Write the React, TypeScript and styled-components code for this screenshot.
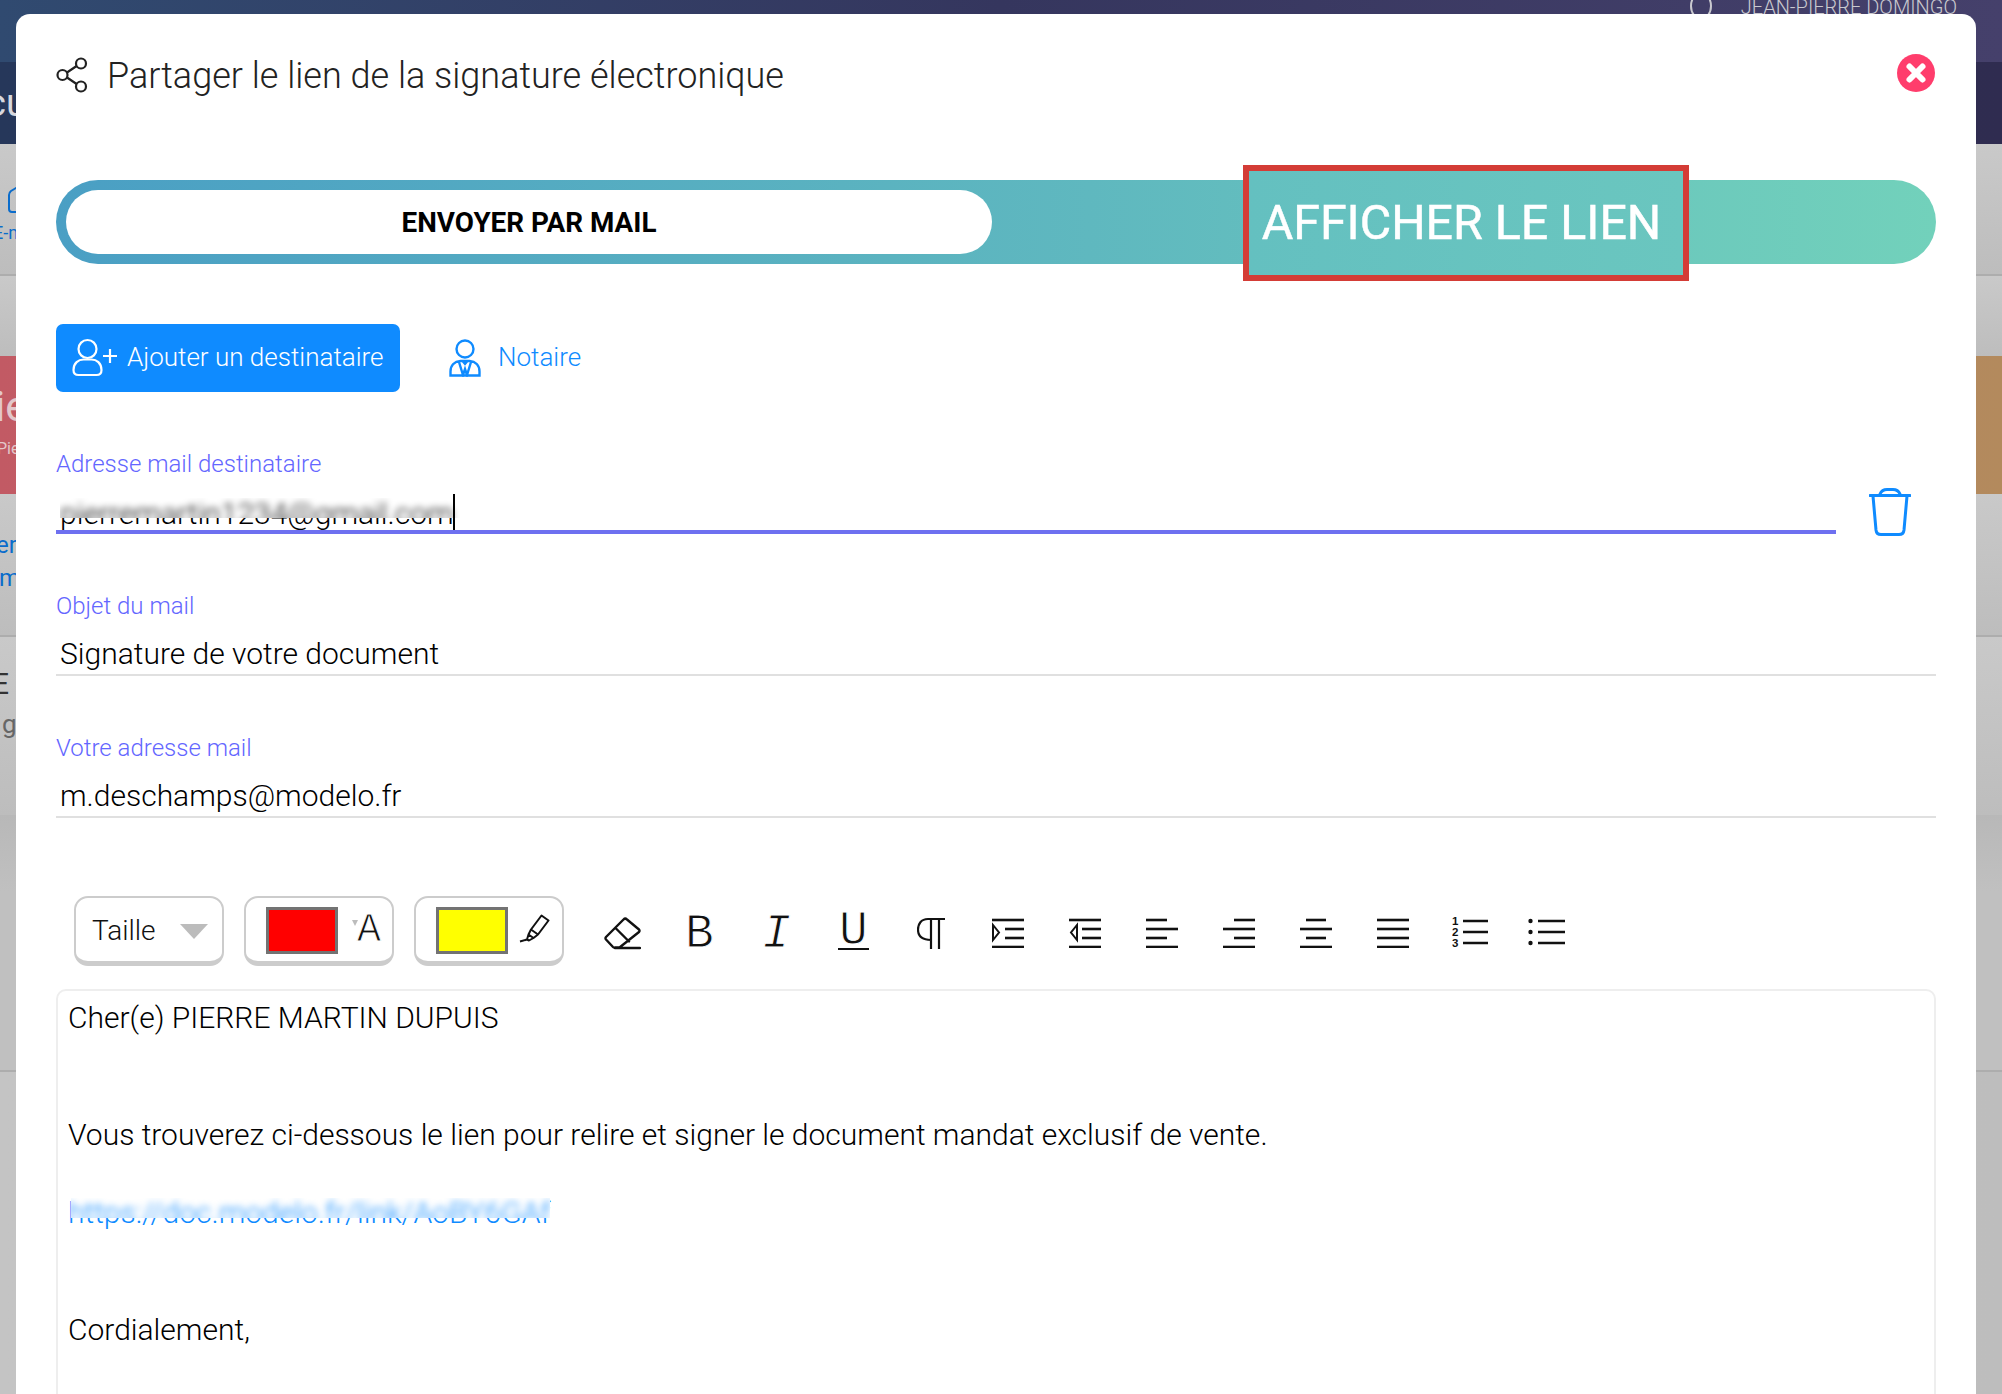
import React from "react";
import styled, { createGlobalStyle } from "styled-components";

const Global = createGlobalStyle`
  html, body { margin: 0; height: 100%; overflow: hidden; background: #c4c4c4; }
  #root { height: 100%; }
  * { box-sizing: border-box; }
`;

/* ---------- dimmed page behind the dialog ---------- */
const Page = styled.div`
  height: 1394px;
  display: flex;
  flex-direction: column;
  overflow: hidden;
  font-family: Roboto, sans-serif;
`;
const TopBar = styled.div`
  height: 62px;
  display: flex;
  justify-content: flex-end;
  align-items: flex-start;
  gap: 29px;
  padding-right: 45px;
  background: linear-gradient(90deg, #304a70 0%, #35365e 50%, #45406b 100%);
  color: #c9c9cf;
  font-size: 20px;
  line-height: 14px;
  font-weight: 300;
`;
const UserRing = styled.span`
  width: 22px;
  height: 28px;
  margin-top: -8px;
  border: 2px solid #c9c9cf;
  border-radius: 50%;
`;
const SubBar = styled.div`
  height: 82px;
  display: flex;
  align-items: center;
  background: linear-gradient(90deg, #26375a 0%, #2f2c50 100%);
  color: #d8d8de;
`;
const Section = styled.div<{ $h: number; $line?: boolean; $bg?: string }>`
  height: ${(p) => p.$h}px;
  flex: none;
  background: ${(p) => p.$bg || "linear-gradient(180deg, #c9c9c9, #bdbdbd)"};
  border-bottom: ${(p) => (p.$line ? "2px solid #adadad" : "0")};
  color: #0a6ccb;
  font-size: 24px;
  overflow: hidden;
`;
const Clip = styled.div<{ $top: number; $left: number; $size?: number; $color?: string }>`
  padding-top: ${(p) => p.$top}px;
  margin-left: ${(p) => p.$left}px;
  font-size: ${(p) => p.$size || 24}px;
  line-height: 1;
  white-space: nowrap;
  color: ${(p) => p.$color || "inherit"};
`;

/* ---------- dialog ---------- */
const Modal = styled.div`
  position: fixed;
  left: 16px;
  top: 14px;
  width: 1960px;
  height: 1400px;
  padding: 40px 40px 0;
  background: #fff;
  border-radius: 14px;
  font-family: Roboto, sans-serif;
  font-weight: 300;
  color: #000;
  overflow: hidden;
`;
const Header = styled.div`
  height: 42px;
  display: flex;
  align-items: center;
  gap: 19px;
`;
const Title = styled.h1`
  flex: 1;
  margin: 0;
  padding-top: 2px;
  font-size: 36px;
  font-weight: 300;
  color: #222;
  white-space: nowrap;
`;
const CloseSlot = styled.span`
  display: flex;
  margin-top: -4px;
`;
const Tabs = styled.div`
  position: relative;
  height: 84px;
  margin-top: 84px;
  padding: 10px;
  border-radius: 42px;
  background: linear-gradient(90deg, #4a9fc4 0%, #5fb8bf 55%, #72d1bb 100%);
`;
const ActiveTab = styled.div`
  width: 926px;
  height: 64px;
  display: flex;
  align-items: center;
  justify-content: center;
  border-radius: 32px;
  background: #fff;
  font-size: 27.8px;
  font-weight: 700;
  color: #000;
`;
const HighlightedTab = styled.div`
  position: absolute;
  left: 1187px;
  top: -15px;
  width: 446px;
  height: 116px;
  display: flex;
  align-items: center;
  justify-content: center;
  padding: 0 9px 2px 0;
  border: 6px solid #d43c36;
  background: linear-gradient(90deg, #64c0c0, #6ac6bf);
  color: #fff;
  font-size: 48.3px;
  font-weight: 400;
  -webkit-text-stroke: 0.5px #fff;
`;
const Actions = styled.div`
  display: flex;
  align-items: center;
  margin-top: 60px;
  height: 68px;
`;
const PrimaryButton = styled.div`
  width: 344px;
  height: 68px;
  display: flex;
  align-items: center;
  gap: 9px;
  padding-left: 16px;
  border-radius: 7px;
  background: #0f8bff;
  color: #fff;
  font-size: 26px;
`;
const ButtonText = styled.span`
  margin-top: -2px;
`;
const LinkButton = styled.div`
  display: flex;
  align-items: center;
  gap: 17px;
  margin-left: 49px;
  color: #0f8bff;
  font-size: 26px;
`;
const Row = styled.div`
  display: flex;
  align-items: flex-start;
`;
const Field = styled.div`
  flex: 1;
  margin-top: 57px;
`;
const Label = styled.div`
  height: 30px;
  font-size: 24px;
  line-height: 30px;
  color: #6366ff;
`;
const Value = styled.div<{ $active?: boolean }>`
  height: 55px;
  padding: ${(p) => (p.$active ? 15 : 13)}px 0 0 4px;
  font-size: 30px;
  line-height: 40px;
  border-bottom: ${(p) => (p.$active ? "4px solid #6e70f0" : "2px solid #e0e0e0")};
`;
const Masked = styled.span<{ $link?: boolean }>`
  position: relative;
  display: inline-block;
  white-space: nowrap;
  color: ${(p) => (p.$link ? "#0f8bff" : "inherit")};
`;
/* A privacy smear lying over the upper half of the text: the words are
   repeated blurred by a pseudo-element, so that the sharp text only shows below it. */
const Smear = styled.span<{ $top: number; $left: number; $right: number }>`
  position: absolute;
  left: ${(p) => p.$left}px;
  right: ${(p) => p.$right}px;
  top: ${(p) => p.$top}px;
  height: 20px;
  overflow: hidden;
  background: #fff;
  &::before {
    content: attr(data-text);
    position: absolute;
    left: ${(p) => -p.$left}px;
    top: ${(p) => -p.$top}px;
    white-space: nowrap;
    filter: blur(3.5px);
  }
`;
const Caret = styled.span`
  position: absolute;
  right: -1px;
  top: 0;
  width: 2px;
  height: 36px;
  background: #000;
  z-index: 1;
`;
const TrashSlot = styled.div`
  margin: 96px 0 -2px 33px;
  width: 67px;
  height: 48px;
`;
const Toolbar = styled.div`
  height: 70px;
  margin-top: 78px;
  padding-left: 18px;
  display: flex;
  align-items: center;
`;
const ToolBox = styled.div`
  width: 150px;
  height: 70px;
  margin-right: 20px;
  display: flex;
  align-items: center;
  padding-left: 20px;
  border: 2px solid #ccc;
  border-bottom-width: 5px;
  border-radius: 14px;
  font-size: 28px;
  color: #111;
`;
const Caretdown = styled.span`
  width: 0;
  height: 0;
  margin: 3px 0 0 24px;
  border-left: 14px solid transparent;
  border-right: 14px solid transparent;
  border-top: 15px solid #bcbcbc;
`;
const SizeText = styled.span`
  margin: 2px 0 0 -4px;
`;
const Swatch = styled.span<{ $color: string }>`
  width: 72px;
  height: 47px;
  flex: none;
  margin-top: 2px;
  background: ${(p) => p.$color};
  border: 3px solid #737373;
`;
const MiniTick = styled.span`
  width: 0;
  height: 0;
  margin: -14px 0 0 14px;
  border-left: 3px solid transparent;
  border-right: 3px solid transparent;
  border-top: 6px solid #bcbcbc;
`;
const LetterA = styled.span`
  margin: 3px 0 0 -1px;
  font-family: "Liberation Mono", monospace;
  font-size: 40px;
  line-height: 1;
  -webkit-text-stroke: 0.9px #fff;
`;
const ToolIcons = styled.div`
  display: flex;
`;
const ToolIcon = styled.span`
  width: 77px;
  height: 48px;
  padding-top: 4px;
  display: flex;
  align-items: center;
  justify-content: center;
`;
const Glyph = styled.span<{ $italic?: boolean; $under?: boolean }>`
  padding-top: ${(p) => (p.$under ? 0 : 2)}px;
  margin-top: ${(p) => (p.$under ? -3 : 0)}px;
  font-family: "Liberation Mono", monospace;
  font-size: 48px;
  line-height: ${(p) => (p.$under ? "34px" : "1")};
  color: #111;
  -webkit-text-stroke: 1px #fff;
  font-style: ${(p) => (p.$italic ? "italic" : "normal")};
  ${(p) =>
    p.$under
      ? `
    width: 31px;
    display: flex;
    justify-content: center;
    border-bottom: 2px solid #111;
  `
      : ""}
`;
const Editor = styled.div`
  margin-top: 23px;
  height: 500px;
  padding: 7px 10px 0;
  border: 2px solid #eee;
  border-radius: 10px;
  font-size: 30px;
  line-height: 39px;
  color: #000;
`;
const Para = styled.p<{ $gap: number }>`
  margin: 0 0 ${(p) => p.$gap}px;
`;
const HighlighterSvg = styled.svg`
  margin: 0 0 2px 10px;
  flex: none;
`;

const blue = "#0f8bff";

const ShareIcon = () => (
  <svg width="32" height="36" viewBox="0 0 32 36" fill="none" stroke="#222" strokeWidth="2.2">
    <circle cx="6.500" cy="18" r="5" />
    <circle cx="25" cy="6.500" r="5" />
    <circle cx="25" cy="29.500" r="5" />
    <path d="M11 15.500 20.600 9M11 20.500 20.600 27" />
  </svg>
);
const CloseIcon = () => (
  <svg width="40" height="38" viewBox="0 0 40 38">
    <circle cx="20" cy="19" r="19" fill="#ff3d6c" />
    <path d="M13.500 12.500 26.500 25.500M26.500 12.500 13.500 25.500" stroke="#fff" strokeWidth="6" strokeLinecap="round" />
  </svg>
);
const AddUserIcon = () => (
  <svg width="46" height="40" viewBox="0 0 46 40" fill="none" stroke="#fff" strokeWidth="2.200">
    <circle cx="15.500" cy="11" r="9" />
    <path d="M1.500 32c0-7 5-10.500 10-10.500h8c5 0 10 3.500 10 10.500 0 3-2 5-5 5h-18c-3 0-5-2-5-5Z" />
    <path d="M31 18h14M38 11v14" />
  </svg>
);
const NotaryIcon = () => (
  <svg width="32" height="38" viewBox="0 0 32 38" fill="none" stroke={blue} strokeWidth="2.400">
    <circle cx="16" cy="10" r="8.500" />
    <path d="M1.500 36.500v-4c0-6 4-10 10-10.500h9c6 .5 10 4.500 10 10.500v4ZM10 23l4 13 2-6 2 6 4-13M13.500 22l2.500 3 2.500-3" />
  </svg>
);
const TrashIcon = () => (
  <svg width="42" height="48" viewBox="0 0 42 48" fill="none" stroke={blue} strokeWidth="3" strokeLinecap="round">
    <path d="M1 7.500H41M11 6q2-4.500 7-4.500h6q5 0 7 4.500M4 8l3 34q.5 4.500 5 4.500h18q4.500 0 5-4.500l3-34" />
  </svg>
);
const HighlighterIcon = () => (
  <HighlighterSvg width="32" height="29" viewBox="0 0 32 29" fill="none" stroke="#111" strokeWidth="2" strokeLinejoin="round">
    <path d="M23.500 1.500 30.500 6.500 20 20.500 13 15.500ZM13 15.500 10.500 20.500 15.500 24 20 20.500M10.500 20.500 9 25.500 11 26.500 15.500 24M9 25.500 2 27.500" />
  </HighlighterSvg>
);
const EraserIcon = () => (
  <svg width="37" height="33" viewBox="0 0 37 33" fill="none" stroke="#111" strokeWidth="2.400" strokeLinejoin="round" strokeLinecap="round">
    <path d="M19.500 2.500 2 20a2 2 0 0 0 0 2.500l7 7.500a2 2 0 0 0 2 .5h4.500L35 15a2 2 0 0 0 0-2.500L23 2.500a2.500 2.500 0 0 0-3.500 0ZM11 31H36M12 11.500 25 24.500" />
  </svg>
);
const PilcrowIcon = () => (
  <svg width="28" height="32" viewBox="0 0 28 32" fill="none" stroke="#111" strokeWidth="2.200">
    <path d="M28 2H11C4 2 1 7 1 12.500 1 18 4 23 14 23M14 2V32M22 2V32" />
  </svg>
);
const Lines = ({ rows }: { rows: [number, number][] }) => (
  <>
    {rows.map(([a, b], i) => (
      <path key={i} d={`M${a} ${2 + i * 9}H${b}`} />
    ))}
  </>
);
const ListIcon = ({ rows, mark }: { rows: [number, number][]; mark?: "in" | "out" }) => (
  <svg width="32" height="30" viewBox="0 0 32 30" fill="none" stroke="#111" strokeWidth="2.600">
    <Lines rows={rows} />
    {mark === "in" && <path d="M1 7v15l6-7.500Z" strokeWidth="2" />}
    {mark === "out" && <path d="M8 7v15l-6-7.500Z" strokeWidth="2" />}
  </svg>
);
const OrderedIcon = () => (
  <svg width="36" height="34" viewBox="0 0 36 34" fill="none" stroke="#111" strokeWidth="2.600">
    <path d="M11 5H36M11 16H36M11 27H36" />
    <g fill="#111" stroke="none" fontFamily="Liberation Sans, sans-serif" fontWeight="700" fontSize="11.500">
      <text x="0" y="9">1</text>
      <text x="0" y="20">2</text>
      <text x="0" y="31">3</text>
    </g>
  </svg>
);
const BulletIcon = () => (
  <svg width="37" height="34" viewBox="0 0 37 34" fill="none" stroke="#111" strokeWidth="2.600">
    <path d="M10 5H37M10 16H37M10 27H37" />
    <circle cx="2.500" cy="5" r="2.200" fill="#111" stroke="none" />
    <circle cx="2.500" cy="16" r="2.200" fill="#111" stroke="none" />
    <circle cx="2.500" cy="27" r="2.200" fill="#111" stroke="none" />
  </svg>
);

const emailText = "pierremartin1234@gmail.com";
const linkText = "https://doc.modelo.fr/link/AoBY6GAf";

export default function App() {
  return (
    <>
      <Global />
      <Page>
        <TopBar>
          <UserRing />
          <span>JEAN-PIERRE DOMINGO</span>
        </TopBar>
        <SubBar>
          <Clip $top={0} $left={-14} $size={38}>cu</Clip>
        </SubBar>
        <Section $h={132} $line>
          <Clip $top={40} $left={7}>
            <svg width="20" height="29" viewBox="0 0 20 29" fill="none" stroke="#0a6ccb" strokeWidth="2">
              <path d="M14 1 4 7Q2 8.500 2 11V25q0 3 3 3H20" />
            </svg>
          </Clip>
          <Clip $top={7} $left={-7} $size={18}>E-m</Clip>
        </Section>
        <Section $h={80} />
        <Section $h={138} $bg="linear-gradient(90deg, #c25a64 0%, #b8786a 50%, #b38a5d 100%)">
          <Clip $top={30} $left={-5} $size={42} $color="#e3c7ca">ie</Clip>
          <Clip $top={13} $left={-3} $size={16} $color="#e3c7ca">Pie</Clip>
        </Section>
        <Section $h={143} $line>
          <Clip $top={39} $left={-4} $size={24}>er</Clip>
          <Clip $top={9} $left={-1} $size={24}>m</Clip>
        </Section>
        <Section $h={178}>
          <Clip $top={32} $left={-8} $size={30} $color="#333">E</Clip>
          <Clip $top={12} $left={2} $size={26} $color="#666">g</Clip>
        </Section>
        <Section $h={257} $line $bg="linear-gradient(180deg, #b8b8b8, #c0c0c0 30%)" />
        <Section $h={322} $bg="linear-gradient(90deg, #c4c4c4, #bdbdbd)" />
      </Page>

      <Modal>
        <Header>
          <ShareIcon />
          <Title>Partager le lien de la signature électronique</Title>
          <CloseSlot>
            <CloseIcon />
          </CloseSlot>
        </Header>

        <Tabs>
          <ActiveTab>ENVOYER PAR MAIL</ActiveTab>
          <HighlightedTab>AFFICHER LE LIEN</HighlightedTab>
        </Tabs>

        <Actions>
          <PrimaryButton>
            <AddUserIcon />
            <ButtonText>Ajouter un destinataire</ButtonText>
          </PrimaryButton>
          <LinkButton>
            <NotaryIcon />
            <ButtonText>Notaire</ButtonText>
          </LinkButton>
        </Actions>

        <Row>
          <Field>
            <Label>Adresse mail destinataire</Label>
            <Value $active>
              <Masked>
                {emailText}
                <Smear $top={4} $left={0} $right={-6} data-text={emailText} />
                <Caret />
              </Masked>
            </Value>
          </Field>
          <TrashSlot>
            <TrashIcon />
          </TrashSlot>
        </Row>

        <Field>
          <Label>Objet du mail</Label>
          <Value>Signature de votre document</Value>
        </Field>
        <Field>
          <Label>Votre adresse mail</Label>
          <Value>m.deschamps@modelo.fr</Value>
        </Field>

        <Toolbar>
          <ToolBox>
            <SizeText>Taille</SizeText>
            <Caretdown />
          </ToolBox>
          <ToolBox>
            <Swatch $color="#ff0000" />
            <MiniTick />
            <LetterA>A</LetterA>
          </ToolBox>
          <ToolBox>
            <Swatch $color="#ffff00" />
            <HighlighterIcon />
          </ToolBox>
          <ToolIcons>
            <ToolIcon><EraserIcon /></ToolIcon>
            <ToolIcon><Glyph>B</Glyph></ToolIcon>
            <ToolIcon><Glyph $italic>I</Glyph></ToolIcon>
            <ToolIcon><Glyph $under>U</Glyph></ToolIcon>
            <ToolIcon><PilcrowIcon /></ToolIcon>
            <ToolIcon><ListIcon rows={[[0, 32], [13, 32], [13, 32], [0, 32]]} mark="in" /></ToolIcon>
            <ToolIcon><ListIcon rows={[[0, 32], [13, 32], [13, 32], [0, 32]]} mark="out" /></ToolIcon>
            <ToolIcon><ListIcon rows={[[0, 21], [0, 32], [0, 21], [0, 32]]} /></ToolIcon>
            <ToolIcon><ListIcon rows={[[11, 32], [0, 32], [11, 32], [0, 32]]} /></ToolIcon>
            <ToolIcon><ListIcon rows={[[6, 26], [0, 32], [6, 26], [0, 32]]} /></ToolIcon>
            <ToolIcon><ListIcon rows={[[0, 32], [0, 32], [0, 32], [0, 32]]} /></ToolIcon>
            <ToolIcon><OrderedIcon /></ToolIcon>
            <ToolIcon><BulletIcon /></ToolIcon>
          </ToolIcons>
        </Toolbar>

        <Editor>
          <Para $gap={78}>Cher(e) PIERRE MARTIN DUPUIS</Para>
          <Para $gap={39}>Vous trouverez ci-dessous le lien pour relire et signer le document mandat exclusif de vente.</Para>
          <Para $gap={78}>
            <Masked $link>
              {linkText}
              <Smear $top={5} $left={3} $right={0} data-text={linkText} />
            </Masked>
          </Para>
          <Para $gap={0}>Cordialement,</Para>
        </Editor>
      </Modal>
    </>
  );
}
